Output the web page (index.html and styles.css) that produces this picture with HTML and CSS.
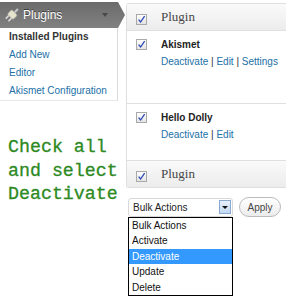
FILE: index.html
```html
<!DOCTYPE html>
<html lang="en">
<head>
  <meta charset="UTF-8">
  <meta name="viewport" content="width=device-width, initial-scale=1.0">
  <title>Plugins</title>
  <link rel="stylesheet" href="styles.css">
</head>
<body>
  <div class="page">
    <div class="sidebar">
      <div class="menu-head">
        <svg class="menu-icon" width="15" height="15" viewBox="0 0 14 14">
          <g transform="rotate(45 7 7)">
            <rect x="6" y="-1.5" width="2" height="4.5" fill="#c4c4c4"/>
            <rect x="3.3" y="3" width="7.4" height="5.8" rx="1.2" fill="#e6e3cc" stroke="#a9a9a9" stroke-width="0.6"/>
            <rect x="4.5" y="8.8" width="1.5" height="4" fill="#dcdcdc"/>
            <rect x="8" y="8.8" width="1.5" height="4" fill="#dcdcdc"/>
          </g>
        </svg>
        <span class="menu-title">Plugins</span>
        <span class="menu-toggle"></span>
      </div>
      <ul class="submenu">
        <li class="current">Installed Plugins</li>
        <li><a href="#">Add New</a></li>
        <li><a href="#">Editor</a></li>
        <li><a href="#">Akismet Configuration</a></li>
      </ul>
      <p class="note">Check all<br>and select<br>Deactivate</p>
    </div>

    <div class="main">
      <div class="plugins">
        <div class="plugins-head">
          <div class="cb-cell">
            <span class="cb"><svg width="9" height="9" viewBox="0 0 9 9"><path d="M1.6 4.6 L3.6 7 L7.6 1.2" fill="none" stroke="#2b47b5" stroke-width="1.3"/></svg></span>
          </div>
          <span class="col-title">Plugin</span>
        </div>

        <div class="plugin-row akismet">
          <div class="cb-cell">
            <span class="cb"><svg width="9" height="9" viewBox="0 0 9 9"><path d="M1.6 4.6 L3.6 7 L7.6 1.2" fill="none" stroke="#2b47b5" stroke-width="1.3"/></svg></span>
          </div>
          <div class="plugin-info">
            <strong>Akismet</strong>
            <div class="actions"><a href="#">Deactivate</a> | <a href="#">Edit</a> | <a href="#">Settings</a></div>
          </div>
        </div>

        <div class="plugin-row dolly">
          <div class="cb-cell">
            <span class="cb"><svg width="9" height="9" viewBox="0 0 9 9"><path d="M1.6 4.6 L3.6 7 L7.6 1.2" fill="none" stroke="#2b47b5" stroke-width="1.3"/></svg></span>
          </div>
          <div class="plugin-info">
            <strong>Hello Dolly</strong>
            <div class="actions"><a href="#">Deactivate</a> | <a href="#">Edit</a></div>
          </div>
        </div>

        <div class="plugins-foot">
          <div class="cb-cell">
            <span class="cb"><svg width="9" height="9" viewBox="0 0 9 9"><path d="M1.6 4.6 L3.6 7 L7.6 1.2" fill="none" stroke="#2b47b5" stroke-width="1.3"/></svg></span>
          </div>
          <span class="col-title">Plugin</span>
        </div>
      </div>

      <div class="bulk">
        <div class="select">
          <span>Bulk Actions</span>
          <span class="select-arrow"><span class="tri"></span></span>
          <ul class="options">
            <li>Bulk Actions</li>
            <li>Activate</li>
            <li class="selected">Deactivate</li>
            <li>Update</li>
            <li>Delete</li>
          </ul>
        </div>
        <button class="apply">Apply</button>
      </div>
    </div>
  </div>
</body>
</html>
```

FILE: styles.css
```css
body {
  margin: 0;
  min-height: 300px;
  font-family: "Liberation Sans", Arial, sans-serif;
  font-size: 10px;
  color: #333;
  background: #fff;
}

a {
  color: #2170a8;
  text-decoration: none;
}

.page {
  display: flex;
}

/* Admin menu */
.sidebar {
  width: 126px;
  flex: none;
}

.menu-head {
  margin-top: 2px;
  width: 125px;
  height: 26px;
  display: flex;
  align-items: center;
  background: linear-gradient(#6b6b6b, #818181);
  clip-path: polygon(0 0, 118px 0, 125px 50%, 118px 100%, 0 100%);
  color: #fff;
  font-size: 12px;
  text-shadow: 0 -1px 0 #3f3f3f;
}

.menu-icon {
  margin-left: 4px;
  flex: none;
}

.menu-title {
  margin-left: 4px;
  flex: 1;
}

.menu-toggle {
  margin-right: 17px;
  width: 0;
  height: 0;
  border-left: 3px solid transparent;
  border-right: 3px solid transparent;
  border-top: 4px solid #484848;
}

.submenu {
  list-style: none;
  margin: 0;
  padding: 0;
  width: 117px;
  border-right: 1px solid #dcdcdc;
  border-bottom: 1px solid #e8e8e8;
}

.submenu li {
  height: 18px;
  line-height: 18px;
  padding-left: 9px;
}

.submenu .current {
  font-weight: bold;
  color: #333;
}

.note {
  margin: 35px 0 0 8px;
  font-family: "Liberation Mono", "Courier New", monospace;
  font-size: 18.3px;
  line-height: 23.5px;
  color: #2d8a1f;
  -webkit-text-stroke: 0.3px #2d8a1f;
}

/* Plugin table */
.main {
  flex: 1;
  min-width: 0;
}

.plugins {
  margin-top: 3px;
  border: 1px solid #dfdfdf;
  border-right: 0;
  border-radius: 3px 0 0 3px;
}

.plugins-head,
.plugins-foot {
  display: flex;
  align-items: center;
  height: 26px;
  background: linear-gradient(#fafafa, #ececec);
}

.plugins-head {
  border-bottom: 1px solid #dfdfdf;
}

.plugins-head .cb,
.plugins-foot .cb {
  margin-top: 4px;
}

.col-title {
  font-family: "Liberation Serif", Georgia, serif;
  font-size: 13px;
  color: #464646;
}

.cb-cell {
  width: 34px;
  flex: none;
  padding-left: 9px;
  box-sizing: border-box;
}

.cb {
  display: flex;
  align-items: center;
  justify-content: center;
  width: 11px;
  height: 11px;
  box-sizing: border-box;
  border: 1px solid #a9a9a9;
  background: linear-gradient(#fff, #e3e3e3);
}

.plugin-row {
  display: flex;
  border-bottom: 1px solid #dfdfdf;
}

.plugin-row .cb {
  margin-top: 8px;
}

.akismet {
  height: 72px;
}

.dolly {
  height: 56px;
}

.plugin-info {
  padding-top: 5px;
  line-height: 17px;
}

.plugin-info strong {
  color: #222;
}

.actions {
  color: #333;
}

/* Bulk actions */
.bulk {
  display: flex;
  align-items: center;
  gap: 6px;
  margin: 9px 0 0 2px;
}

.select {
  position: relative;
  display: flex;
  align-items: center;
  width: 105px;
  height: 19px;
  box-sizing: border-box;
  border: 1px solid #d8d8d8;
  border-radius: 3px;
  padding-left: 4px;
  color: #222;
}

.select-arrow {
  display: flex;
  align-items: center;
  justify-content: center;
  margin-left: auto;
  margin-right: 1px;
  width: 12px;
  height: 14px;
  box-sizing: border-box;
  border: 1px solid #89a9d2;
  background: linear-gradient(#e8f1fb, #c3d9f1);
}

.tri {
  width: 0;
  height: 0;
  border-left: 3px solid transparent;
  border-right: 3px solid transparent;
  border-top: 3px solid #111;
}

.options {
  position: absolute;
  top: 18px;
  left: -1px;
  width: 105px;
  box-sizing: border-box;
  list-style: none;
  margin: 0;
  padding: 0;
  border: 1px solid #000;
  background: #fff;
  z-index: 10;
}

.options li {
  height: 15.5px;
  line-height: 15.5px;
  padding-left: 3px;
  color: #111;
}

.options .selected {
  background: #3399ff;
  color: #fff;
}

.apply {
  width: 42px;
  height: 20px;
  padding: 0;
  border: 1px solid #bbb;
  border-radius: 10px;
  background: linear-gradient(#fff, #ececec);
  font-family: "Liberation Sans", Arial, sans-serif;
  font-size: 10px;
  color: #464646;
}
```
